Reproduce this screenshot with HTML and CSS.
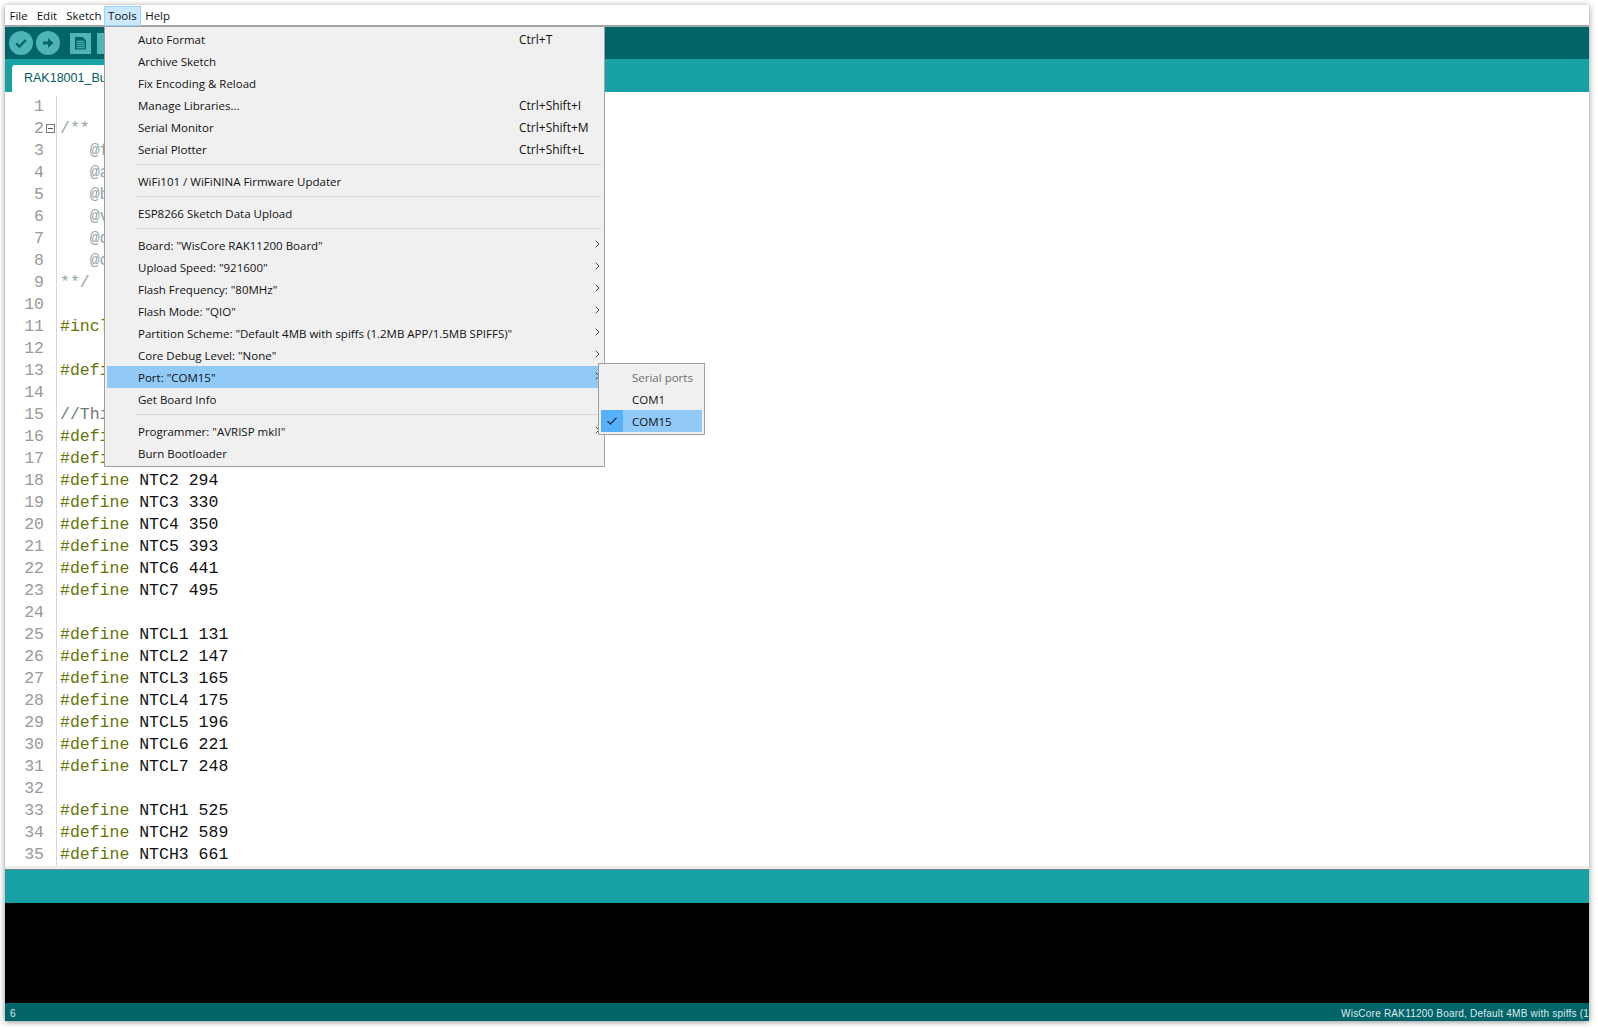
FILE: index.html
```html
<!DOCTYPE html>
<html lang="en">
<head>
<meta charset="utf-8">
<title>RAK18001_Buzzer | Arduino</title>
<link rel="stylesheet" href="styles.css">
</head>
<body>
<div class="window">
  <nav class="menubar">
    <span class="mb-item">File</span>
    <span class="mb-item">Edit</span>
    <span class="mb-item">Sketch</span>
    <span class="mb-item active">Tools</span>
    <span class="mb-item">Help</span>
  </nav>
  <div class="toolbar">
    <svg class="tool round" viewBox="0 0 24 24"><circle cx="12" cy="12" r="12" fill="#4fb4b6"/><path d="M7.300 12.300l3.200 3.200 6.200-6.500" fill="none" stroke="#006468" stroke-width="2.400"/></svg>
    <svg class="tool round" viewBox="0 0 24 24"><circle cx="12" cy="12" r="12" fill="#4fb4b6"/><path d="M7 10.600h5V7.300l5.500 4.700-5.500 4.700v-3.300H7z" fill="#006468"/></svg>
    <svg class="tool square first" viewBox="0 0 21 21"><rect width="21" height="21" fill="#4fb4b6"/><path d="M5 4h7.500L16 7.500V16.500H5z" fill="#006468"/><path d="M6.500 8.500h8M6.500 10.500h8M6.500 12.500h8M6.500 14.500h8M8 7v9M10 7v9M12 7v9M14 8v8" stroke="#4fb4b6" stroke-width=".7"/></svg>
    <svg class="tool square" viewBox="0 0 21 21"><rect width="21" height="21" fill="#4fb4b6"/></svg>
  </div>
  <div class="tabbar"><div class="tab">RAK18001_Buzzer</div></div>
  <main class="editor">
    <div class="line"><span class="num">1</span><span class="fold"></span><span class="code"></span></div>
    <div class="line"><span class="num">2</span><span class="fold"><svg class="foldbox" viewBox="0 0 9 9"><rect x=".5" y=".5" width="8" height="8" fill="none" stroke="#777"/><path d="M2 4.500h5" stroke="#555"/></svg></span><span class="code cm">/**</span></div>
    <div class="line"><span class="num">3</span><span class="fold"></span><span class="code cm">   @file</span></div>
    <div class="line"><span class="num">4</span><span class="fold"></span><span class="code cm">   @author</span></div>
    <div class="line"><span class="num">5</span><span class="fold"></span><span class="code cm">   @brief</span></div>
    <div class="line"><span class="num">6</span><span class="fold"></span><span class="code cm">   @version</span></div>
    <div class="line"><span class="num">7</span><span class="fold"></span><span class="code cm">   @date</span></div>
    <div class="line"><span class="num">8</span><span class="fold"></span><span class="code cm">   @copyright</span></div>
    <div class="line"><span class="num">9</span><span class="fold"></span><span class="code cm">**/</span></div>
    <div class="line"><span class="num">10</span><span class="fold"></span><span class="code"></span></div>
    <div class="line"><span class="num">11</span><span class="fold"></span><span class="code"><span class="kw">#include</span></span></div>
    <div class="line"><span class="num">12</span><span class="fold"></span><span class="code"></span></div>
    <div class="line"><span class="num">13</span><span class="fold"></span><span class="code"><span class="kw">#define</span></span></div>
    <div class="line"><span class="num">14</span><span class="fold"></span><span class="code"></span></div>
    <div class="line"><span class="num">15</span><span class="fold"></span><span class="code cmd">//This</span></div>
    <div class="line"><span class="num">16</span><span class="fold"></span><span class="code"><span class="kw">#define</span></span></div>
    <div class="line"><span class="num">17</span><span class="fold"></span><span class="code"><span class="kw">#define</span></span></div>
    <div class="line"><span class="num">18</span><span class="fold"></span><span class="code"><span class="kw">#define</span> NTC2 294</span></div>
    <div class="line"><span class="num">19</span><span class="fold"></span><span class="code"><span class="kw">#define</span> NTC3 330</span></div>
    <div class="line"><span class="num">20</span><span class="fold"></span><span class="code"><span class="kw">#define</span> NTC4 350</span></div>
    <div class="line"><span class="num">21</span><span class="fold"></span><span class="code"><span class="kw">#define</span> NTC5 393</span></div>
    <div class="line"><span class="num">22</span><span class="fold"></span><span class="code"><span class="kw">#define</span> NTC6 441</span></div>
    <div class="line"><span class="num">23</span><span class="fold"></span><span class="code"><span class="kw">#define</span> NTC7 495</span></div>
    <div class="line"><span class="num">24</span><span class="fold"></span><span class="code"></span></div>
    <div class="line"><span class="num">25</span><span class="fold"></span><span class="code"><span class="kw">#define</span> NTCL1 131</span></div>
    <div class="line"><span class="num">26</span><span class="fold"></span><span class="code"><span class="kw">#define</span> NTCL2 147</span></div>
    <div class="line"><span class="num">27</span><span class="fold"></span><span class="code"><span class="kw">#define</span> NTCL3 165</span></div>
    <div class="line"><span class="num">28</span><span class="fold"></span><span class="code"><span class="kw">#define</span> NTCL4 175</span></div>
    <div class="line"><span class="num">29</span><span class="fold"></span><span class="code"><span class="kw">#define</span> NTCL5 196</span></div>
    <div class="line"><span class="num">30</span><span class="fold"></span><span class="code"><span class="kw">#define</span> NTCL6 221</span></div>
    <div class="line"><span class="num">31</span><span class="fold"></span><span class="code"><span class="kw">#define</span> NTCL7 248</span></div>
    <div class="line"><span class="num">32</span><span class="fold"></span><span class="code"></span></div>
    <div class="line"><span class="num">33</span><span class="fold"></span><span class="code"><span class="kw">#define</span> NTCH1 525</span></div>
    <div class="line"><span class="num">34</span><span class="fold"></span><span class="code"><span class="kw">#define</span> NTCH2 589</span></div>
    <div class="line"><span class="num">35</span><span class="fold"></span><span class="code"><span class="kw">#define</span> NTCH3 661</span></div>
  </main>
  <div class="editor-foot"></div>
  <div class="msgbar"></div>
  <div class="console"></div>
  <footer class="statusbar"><span>6</span><span class="board">WisCore RAK11200 Board, Default 4MB with spiffs (1</span></footer>

  <div class="menu">
    <div class="mi"><span>Auto Format</span><span class="sc">Ctrl+T</span></div>
    <div class="mi"><span>Archive Sketch</span></div>
    <div class="mi"><span>Fix Encoding &amp; Reload</span></div>
    <div class="mi"><span>Manage Libraries...</span><span class="sc">Ctrl+Shift+I</span></div>
    <div class="mi"><span>Serial Monitor</span><span class="sc">Ctrl+Shift+M</span></div>
    <div class="mi"><span>Serial Plotter</span><span class="sc">Ctrl+Shift+L</span></div>
    <div class="sep"></div>
    <div class="mi"><span>WiFi101 / WiFiNINA Firmware Updater</span></div>
    <div class="sep"></div>
    <div class="mi"><span>ESP8266 Sketch Data Upload</span></div>
    <div class="sep"></div>
    <div class="mi"><span>Board: "WisCore RAK11200 Board"</span><svg class="chev" viewBox="0 0 5 8"><path d="M.7.7 4 4 .7 7.300" fill="none" stroke="#444"/></svg></div>
    <div class="mi"><span>Upload Speed: "921600"</span><svg class="chev" viewBox="0 0 5 8"><path d="M.7.7 4 4 .7 7.300" fill="none" stroke="#444"/></svg></div>
    <div class="mi"><span>Flash Frequency: "80MHz"</span><svg class="chev" viewBox="0 0 5 8"><path d="M.7.7 4 4 .7 7.300" fill="none" stroke="#444"/></svg></div>
    <div class="mi"><span>Flash Mode: "QIO"</span><svg class="chev" viewBox="0 0 5 8"><path d="M.7.7 4 4 .7 7.300" fill="none" stroke="#444"/></svg></div>
    <div class="mi"><span>Partition Scheme: "Default 4MB with spiffs (1.2MB APP/1.5MB SPIFFS)"</span><svg class="chev" viewBox="0 0 5 8"><path d="M.7.7 4 4 .7 7.300" fill="none" stroke="#444"/></svg></div>
    <div class="mi"><span>Core Debug Level: "None"</span><svg class="chev" viewBox="0 0 5 8"><path d="M.7.7 4 4 .7 7.300" fill="none" stroke="#444"/></svg></div>
    <div class="mi hot"><span>Port: "COM15"</span><svg class="chev" viewBox="0 0 5 8"><path d="M.7.7 4 4 .7 7.300" fill="none" stroke="#444"/></svg></div>
    <div class="mi"><span>Get Board Info</span></div>
    <div class="sep"></div>
    <div class="mi"><span>Programmer: "AVRISP mkII"</span><svg class="chev" viewBox="0 0 5 8"><path d="M.7.7 4 4 .7 7.300" fill="none" stroke="#444"/></svg></div>
    <div class="mi"><span>Burn Bootloader</span></div>
  </div>

  <div class="submenu">
    <div class="si muted"><span class="chk"></span><span>Serial ports</span></div>
    <div class="si"><span class="chk"></span><span>COM1</span></div>
    <div class="si hot"><span class="chk on"><svg viewBox="0 0 12 10"><path d="M1.500 5.200 4.500 8 10.500 1.800" fill="none" stroke="#1d3a52" stroke-width="1.300"/></svg></span><span>COM15</span></div>
  </div>
</div>
</body>
</html>
```
FILE: styles.css
```css
* { box-sizing: border-box; }
html, body { margin: 0; height: 100%; background: #fff; overflow: hidden; }
body { padding: 5px 9px 9px 5px; }

.window {
  position: relative;
  height: 1016px;
  display: flex;
  flex-direction: column;
  box-shadow: 0 1px 6px rgba(0, 0, 0, .45);
  background: #fff;
}

.menubar {
  height: 22px;
  flex: none;
  display: flex;
  background: #fff;
  border-bottom: 2px solid #a6a6a6;
  font: 11.500px "Open Sans", sans-serif;
  color: #111;
}
.mb-item { height: 20px; line-height: 20px; padding: 0 4.500px; margin-top: 1px; }
.mb-item.active { background: #cce8ff; border: 1px solid #99d1ff; line-height: 18px; padding: 0 3px; margin-left: -2px; }

.toolbar {
  height: 32px;
  flex: none;
  background: #006468;
  display: flex;
  align-items: center;
  padding-left: 4px;
  gap: 3px;
}
.tool.round { width: 24px; height: 24px; }
.tool.square { width: 21px; height: 21px; margin-left: 3px; }
.tool.first { margin-left: 7px; }

.tabbar {
  height: 33px;
  flex: none;
  background: #17a1a5;
  display: flex;
  align-items: flex-end;
  padding-left: 7px;
}
.tab {
  width: 150px;
  height: 27px;
  background: #fff;
  border-radius: 3px 3px 0 0;
  padding-left: 12px;
  font: 12.500px/26px "Liberation Sans", sans-serif;
  color: #005c5f;
}

.editor {
  height: 774px;
  flex: none;
  overflow: hidden;
  background: #fff;
  padding-top: 4px;
  font: 16.500px "Liberation Mono", monospace;
}
.line { display: flex; height: 22px; line-height: 22px; color: #111; }
.num { width: 39px; text-align: right; color: #999; flex: none; }
.fold {
  width: 13px;
  flex: none;
  border-right: 1px solid #d8d8d8;
  padding: 6px 0 0 2px;
}
.foldbox { width: 9px; height: 9px; display: block; }
.code { padding-left: 3px; white-space: pre; }
.cm { color: #95a5a6; }
.cmd { color: #727c7d; }
.kw { color: #66750a; }

.editor-foot { height: 3px; flex: none; background: #eee; }
.msgbar { height: 34px; flex: none; background: #17a1a5; border-top: 1px solid #6f8688; }
.console { height: 100px; flex: none; background: #000; }
.statusbar {
  height: 18px;
  flex: none;
  background: #006468;
  color: #dfe9e9;
  display: flex;
  justify-content: space-between;
  padding-left: 5px;
  font: 10px/22px "Liberation Sans", sans-serif;
  letter-spacing: .22px;
  overflow: hidden;
  white-space: nowrap;
}
.board { flex: none; }

.menu {
  position: absolute;
  left: 99px;
  top: 21px;
  width: 501px;
  height: 441px;
  padding: 1px 2px;
  background: #f0f0f0;
  border: 1px solid #a0a0a0;
  font: 11.500px "Open Sans", sans-serif;
  color: #111;
}
.mi {
  position: relative;
  height: 22px;
  line-height: 24px;
  padding-left: 31px;
}
.mi.hot { background: #91c9f7; }
.sc { position: absolute; left: 412px; top: 0; font-size: 12px; }
.chev { position: absolute; right: 2px; top: 6px; width: 5px; height: 8px; }
.sep { height: 10px; padding: 4px 0 0; margin-left: 28px; margin-right: 1px; }
.sep::before { content: ""; display: block; height: 1px; background: #d7d7d7; }

.submenu {
  position: absolute;
  left: 593px;
  top: 358px;
  width: 107px;
  height: 72px;
  padding: 2px;
  background: #f0f0f0;
  border: 1px solid #a0a0a0;
  font: 11.500px "Open Sans", sans-serif;
  color: #111;
}
.si { height: 22px; line-height: 24px; display: flex; }
.si.hot { background: #91c9f7; }
.si.muted { color: #6d6d6d; }
.chk { width: 31px; flex: none; display: flex; align-items: center; justify-content: center; padding-right: 9px; }
.chk.on { width: 22px; padding: 0; background: #56b0fa; margin-right: 9px; }
.chk svg { width: 12px; height: 10px; display: block; }
```
